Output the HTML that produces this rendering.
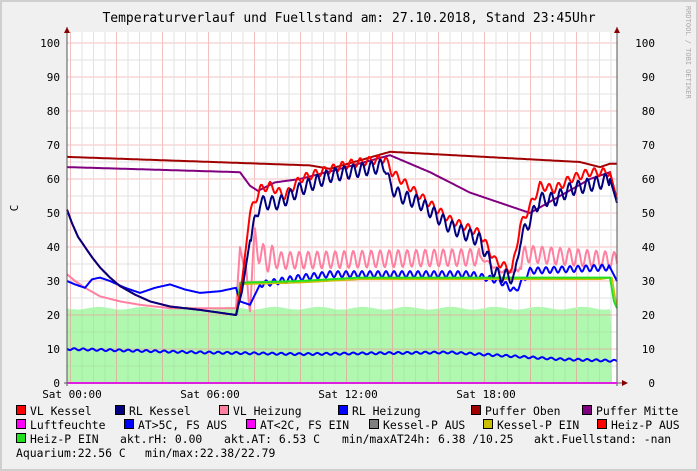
<!DOCTYPE html>
<html><head><meta charset="utf-8"><style>
html,body{margin:0;padding:0;background:#f0f0f0}
svg{display:block}
text{font-family:"DejaVu Sans Mono","Liberation Mono",monospace}
</style></head><body>
<svg id="g" width="698" height="471" xmlns="http://www.w3.org/2000/svg">
<rect x="0" y="0" width="698" height="471" fill="#f0f0f0"/>
<rect x="0.5" y="0.5" width="697" height="470" fill="none" stroke="#cfcfcf" stroke-width="3"/>
<rect x="67" y="32" width="550" height="351" fill="#fff"/>
<g id="grid"></g>
<g id="series" fill="none" stroke-width="2" stroke-linejoin="round"></g>
<line x1="67" y1="27" x2="67" y2="386" stroke="#555"/>
<line x1="617" y1="27" x2="617" y2="386" stroke="#555"/>
<line x1="64" y1="383" x2="622" y2="383" stroke="#555"/>
<polygon points="64,33 67,27 70,33" fill="#800"/>
<polygon points="614,33 617,27 620,33" fill="#800"/>
<polygon points="622,380 628,383 622,386" fill="#800"/>
<line x1="67" y1="383" x2="617" y2="383" stroke="#e020e0" stroke-width="2"/>
<text x="349" y="22" font-size="13" text-anchor="middle">Temperaturverlauf und Fuellstand am: 27.10.2018, Stand 23:45Uhr</text>
<text transform="translate(18,208) rotate(-90)" font-size="11" text-anchor="middle">C</text>
<text transform="translate(686,6) rotate(90)" font-size="7" fill="#aaa">RRDTOOL / TOBI OETIKER</text>
<g id="axl" font-size="11"></g>
<g font-size="11" text-anchor="middle">
<text x="72" y="398">Sat 00:00</text><text x="210" y="398">Sat 06:00</text><text x="348" y="398">Sat 12:00</text><text x="486" y="398">Sat 18:00</text>
</g>
<g id="leg" font-size="11.4"></g>
</svg>
<script>
var NS="http://www.w3.org/2000/svg";
function el(p,t,a,txt){var e=document.createElementNS(NS,t);for(var k in a)e.setAttribute(k,a[k]);if(txt!=null)e.textContent=txt;document.getElementById(p).appendChild(e);return e;}
function Y(v){return 383-3.4*v;}
for(var v=5;v<=100;v+=5){el("grid","line",{x1:67,x2:617,y1:Y(v),y2:Y(v),stroke:v%10?"#e2e2e2":"#f4c0c0","stroke-width":1});}
for(var x=70.5;x<617;x+=11.5){var m=Math.round((x-70.5)/11.5);el("grid","line",{x1:x,x2:x,y1:32,y2:383,stroke:m%4?"#e2e2e2":"#f4c0c0","stroke-width":1});}
for(var v=0;v<=100;v+=10){el("axl","text",{x:60,y:Y(v)+4,"text-anchor":"end"},v);el("axl","text",{x:655,y:Y(v)+4,"text-anchor":"end"},v);}
function interp(k,x){if(x<=k[0][0])return k[0][1];for(var i=1;i<k.length;i++){if(x<=k[i][0]){var a=k[i-1],b=k[i];return a[1]+(b[1]-a[1])*(x-a[0])/(b[0]-a[0]);}}return k[k.length-1][1];}
function path(k,col,amp,per,x0,x1,ph,w){x0=x0||67;x1=x1||617;var d="";for(var x=x0;x<=x1;x++){var v=interp(k,x);if(amp){var a=typeof amp=="function"?amp(x):amp;v+=a*Math.sin((x+(ph||0))*2*Math.PI/per);}d+=(d?"L":"M")+x+","+Y(v).toFixed(1);}
el("series","path",{d:d,stroke:col,"stroke-width":w||2});}
var fd="M67,383";for(var x=67;x<=612;x+=3){fd+="L"+x+","+Y(22+0.4*Math.sin(x/7)).toFixed(1);}fd+="L612,383Z";
el("series","path",{d:fd,fill:"#b0f8b0",stroke:"none"});
for(var x=70.5;x<612;x+=11.5){var m=Math.round((x-70.5)/11.5);el("series","line",{x1:x,x2:x,y1:310,y2:383,stroke:m%4?"#a8e8a8":"#d8b8a0","stroke-width":1});}
for(var v=5;v<=20;v+=5)el("series","line",{x1:67,x2:612,y1:Y(v),y2:Y(v),stroke:v%10?"#a8e8a8":"#d8b8a0","stroke-width":1});
path([[67,10],[200,9],[300,8.5],[450,9],[560,7],[617,6.5]],"#0000ff",0.3,9);
path([[67,66.5],[310,64],[330,63],[390,68],[580,65],[600,63.5],[610,64.5],[617,64.5]],"#a00000");
path([[67,63.5],[240,62],[250,58],[258,56.5],[275,59],[300,60],[340,63],[390,67],[430,62],[470,56],[515,51.5],[530,50],[560,55],[590,60],[610,62],[617,53]],"#800080");
// pink
path([[67,32],[75,30],[85,28],[100,25.5],[120,24],[140,23],[170,22],[236,22],[240,40],[250,25],[255,42],[262,37],[280,36],[480,37],[500,33],[518,33],[525,38],[617,36]],"#ff80a0",function(x){return x<245?0:(x<275?4:(x<480||x>520?2.5:0.5));},9);
// RL Heizung blue
path([[67,30],[75,29],[85,28],[92,30.5],[100,31],[110,30],[125,28],[140,26.5],[155,28],[170,29],[185,27.5],[200,26.5],[220,27],[236,28],[240,24],[250,23],[260,29],[300,31],[330,32],[470,32],[500,30],[515,27],[530,33],[610,34],[617,30]],"#0000ff",function(x){return x>260&&x<610?0.9:0;},8);
path([[237,20],[240,29],[300,29.5],[360,30.5],[600,30.5],[612,31],[617,22]],"#c8c000",0,1,237,617,0,1.5);
path([[237,20],[240,29.5],[300,30],[360,31],[600,31],[610,31],[614,24],[617,22]],"#20e020",0,1,237,617);
var dec=[[67,51],[72,47],[78,43],[85,40],[92,37],[100,34],[110,31],[120,28.5],[135,26],[150,24],[170,22.5],[200,21.5],[236,20]];
var vl=dec.concat([[242,30],[250,50],[260,57],[270,58],[285,55],[300,60],[320,62],[350,64.5],[385,66],[392,62],[400,60],[420,55],[450,48],[480,44],[495,36],[512,33],[520,46],[540,58],[555,57],[570,60],[590,62],[610,62],[617,54]]);
path(vl,"#ff0000",function(x){return x>250&&x<610?1.2:0;},9,67,617,2);
var rl=dec.concat([[242,27],[250,42],[260,53],[280,53],[300,57],[330,61],[385,64],[390,58],[400,55],[420,53],[450,46],[480,42],[495,32],[515,31],[520,42],[540,54],[555,54],[570,57],[600,59],[610,60],[617,53]]);
path(rl,"#000080",function(x){return x>250&&x<610?2:0;},9);
function sw(x,y,c){el("leg","rect",{x:x+0.5,y:y-9.5,width:9,height:9,fill:c,stroke:"#000","stroke-width":1});}
function tx(x,y,s){el("leg","text",{x:x,y:y},s);}
var r1=[[16,"#ff0000","VL Kessel"],[115,"#000080","RL Kessel"],[219,"#ff80a0","VL Heizung"],[338,"#0000ff","RL Heizung"],[471,"#a00000","Puffer Oben"],[582,"#800080","Puffer Mitte"]];
var r2=[[16,"#ff00ff","Luftfeuchte"],[124,"#0000ff","AT>5C, FS AUS"],[246,"#ff00ff","AT<2C, FS EIN"],[369,"#808080","Kessel-P AUS"],[483,"#c8c000","Kessel-P EIN"],[597,"#ff0000","Heiz-P AUS"]];
r1.forEach(function(r){sw(r[0],415,r[1]);tx(r[0]+14,415,r[2]);});
r2.forEach(function(r){sw(r[0],429,r[1]);tx(r[0]+14,429,r[2]);});
sw(16,443,"#20e020");tx(30,443,"Heiz-P EIN");tx(120,443,"akt.rH: 0.00");tx(224,443,"akt.AT: 6.53 C");tx(342,443,"min/maxAT24h: 6.38 /10.25");tx(534,443,"akt.Fuellstand: -nan");
tx(16,457,"Aquarium:22.56 C");tx(145,457,"min/max:22.38/22.79");
</script>
</body></html>
